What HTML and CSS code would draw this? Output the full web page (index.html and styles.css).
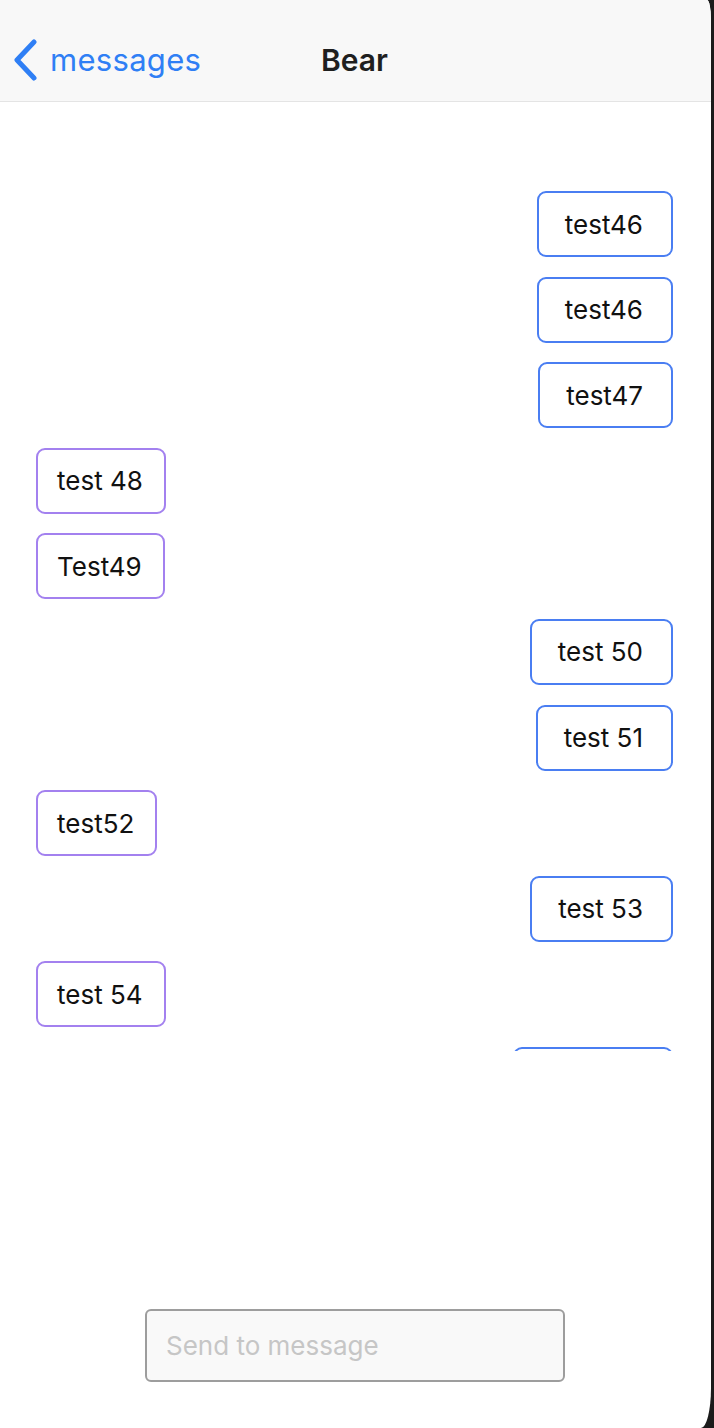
FILE: index.html
```html
<!DOCTYPE html>
<html>
<head>
<meta charset="utf-8">
<link rel="stylesheet" href="styles.css">
</head>
<body>
<div class="screen">
  <header class="nav">
    <div class="back">
      <svg class="chev" width="26" height="42" viewBox="0 0 26 42"><path d="M22 3 L5 21 L22 39" fill="none" stroke="#2f7ff5" stroke-width="5" stroke-linecap="round" stroke-linejoin="round"/></svg>
      <span class="back-label">messages</span>
    </div>
    <div class="title">Bear</div>
  </header>
  <main class="thread">
    <div class="msg out"><span class="bubble">test46</span></div>
    <div class="msg out"><span class="bubble">test46</span></div>
    <div class="msg out"><span class="bubble">test47</span></div>
    <div class="msg in"><span class="bubble">test 48</span></div>
    <div class="msg in"><span class="bubble">Test49</span></div>
    <div class="msg out"><span class="bubble">test 50</span></div>
    <div class="msg out"><span class="bubble">test 51</span></div>
    <div class="msg in"><span class="bubble">test52</span></div>
    <div class="msg out"><span class="bubble">test 53</span></div>
    <div class="msg in"><span class="bubble">test 54</span></div>
    <div class="msg out"><span class="bubble partial"></span></div>
  </main>
  <footer class="composer">
    <div class="input">Send to message</div>
  </footer>
</div>
</body>
</html>
```

FILE: styles.css
```css
html, body {
  margin: 0;
  padding: 0;
  background: #1b1b1b;
}
body {
  width: 714px;
  height: 1428px;
  overflow: hidden;
  font-family: Inter, "Noto Sans", sans-serif;
}
.screen {
  width: 711px;
  height: 1428px;
  background: #ffffff;
  border-top-right-radius: 4px 20px;
  border-bottom-right-radius: 10px 40px;
  display: flex;
  flex-direction: column;
  overflow: hidden;
}
.nav {
  height: 101px;
  flex: none;
  background: #f8f8f8;
  border-bottom: 1px solid #e4e4e4;
  position: relative;
  display: flex;
  align-items: center;
}
.back {
  display: flex;
  align-items: center;
  padding-left: 12px;
  padding-top: 18px;
}
.chev {
  display: block;
  margin-right: 12px;
}
.back-label {
  color: #2f7ff5;
  font-size: 31px;
  line-height: 40px;
  letter-spacing: 0.3px;
}
.title {
  position: absolute;
  left: 0;
  right: 0;
  top: 18px;
  height: 83px;
  display: flex;
  align-items: center;
  justify-content: center;
  font-size: 30px;
  font-weight: 600;
  color: #1f1f1f;
  padding-right: 2px;
}
.thread {
  height: 949px;
  flex: none;
  overflow: hidden;
  padding: 89px 38px 0 36px;
  box-sizing: border-box;
  display: flex;
  flex-direction: column;
  gap: 19.6px;
}
.msg {
  display: flex;
  flex: none;
}
.msg.out { justify-content: flex-end; }
.msg.in { justify-content: flex-start; }
.bubble {
  display: flex;
  align-items: center;
  height: 66px;
  box-sizing: border-box;
  padding: 0 28px 0 26px;
  border: 2px solid #4a7ef2;
  border-radius: 9px;
  font-size: 26px;
  color: #111111;
  background: #fff;
}
.bubble.partial {
  width: 160px;
}
.msg.in .bubble {
  border-color: #a381ef;
  padding: 0 21px 0 19px;
}
.composer {
  flex: 1;
  display: flex;
  justify-content: center;
  align-items: flex-start;
  padding-top: 258px;
}
.input {
  width: 420px;
  height: 73px;
  box-sizing: border-box;
  border: 2px solid #9d9d9d;
  border-radius: 6px;
  background: #f9f9f9;
  color: #c6c6c6;
  font-size: 26px;
  display: flex;
  align-items: center;
  padding-left: 19px;
  margin-right: 1px;
}
```
